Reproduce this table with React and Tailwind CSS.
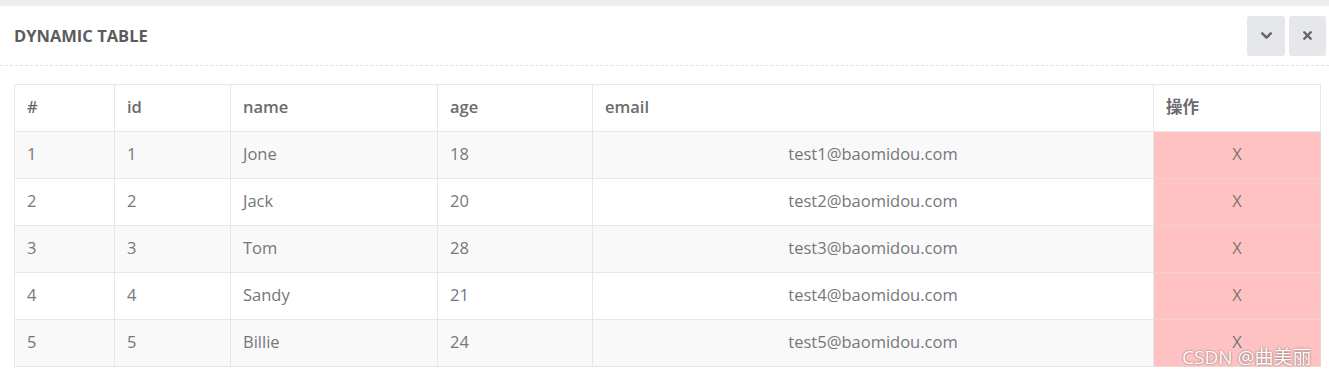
import { ChevronDown, X } from "lucide-react";

const rows = [
  { id: 1, name: "Jone", age: 18, email: "test1@baomidou.com" },
  { id: 2, name: "Jack", age: 20, email: "test2@baomidou.com" },
  { id: 3, name: "Tom", age: 28, email: "test3@baomidou.com" },
  { id: 4, name: "Sandy", age: 21, email: "test4@baomidou.com" },
  { id: 5, name: "Billie", age: 24, email: "test5@baomidou.com" },
];

export default function App() {
  return (
    <div
      className="relative w-[1329px] h-[375px] overflow-hidden bg-white text-[#757779]"
      style={{ fontFamily: '"Open Sans", "Noto Sans CJK SC", sans-serif' }}
    >
      <div className="h-[6px] bg-[#eceef2]" />
      <div className="flex items-center justify-between h-[60px] pl-[14px] pr-[3px] border-b border-dashed border-[#e2e2e2]">
        <h5 className="text-[16.5px] font-bold text-[#5a5c5e] pt-[1px]">DYNAMIC TABLE</h5>
        <div className="flex gap-[4px]">
          <button className="w-[38px] h-[40px] rounded-[3px] bg-[#e6e7ea] flex items-center justify-center">
            <ChevronDown className="w-[17px] h-[17px] text-[#666]" strokeWidth={3.5} />
          </button>
          <button className="w-[37px] h-[40px] rounded-[3px] bg-[#e6e7ea] flex items-center justify-center">
            <X className="w-[13px] h-[13px] text-[#666]" strokeWidth={4.5} />
          </button>
        </div>
      </div>
      <div className="pt-[18px] pl-[14px]">
        <table className="w-[1306px] border-collapse text-[16.5px] table-fixed">
          <colgroup>
            <col className="w-[100px]" />
            <col className="w-[116px]" />
            <col className="w-[207px]" />
            <col className="w-[155px]" />
            <col className="w-[561px]" />
            <col className="w-[167px]" />
          </colgroup>
          <thead>
            <tr className="h-[46.5px]">
              {["#", "id", "name", "age", "email", "操作"].map((h) => (
                <th key={h} className="border border-[#e7e7e7] px-[12px] py-0 text-left font-semibold text-[#6a6c6e]">
                  {h}
                </th>
              ))}
            </tr>
          </thead>
          <tbody>
            {rows.map((r, i) => (
              <tr key={r.id} className={`h-[47px] ${i % 2 === 0 ? "bg-[#f9f9f9]" : "bg-white"}`}>
                <td className="border border-[#e7e7e7] px-[12px]">{i + 1}</td>
                <td className="border border-[#e7e7e7] px-[12px]">{r.id}</td>
                <td className="border border-[#e7e7e7] px-[12px]">{r.name}</td>
                <td className="border border-[#e7e7e7] px-[12px]">{r.age}</td>
                <td className="border border-[#e7e7e7] px-[12px] text-center">{r.email}</td>
                <td className="border border-[#f0d0d0] px-[12px] text-center bg-[#ffc2c2]">X</td>
              </tr>
            ))}
          </tbody>
        </table>
      </div>
      <div className="absolute left-[1182px] top-[343px] text-[19px] text-white [text-shadow:0_0_2px_rgba(0,0,0,0.6)]">
        CSDN @曲美丽
      </div>
    </div>
  );
}
